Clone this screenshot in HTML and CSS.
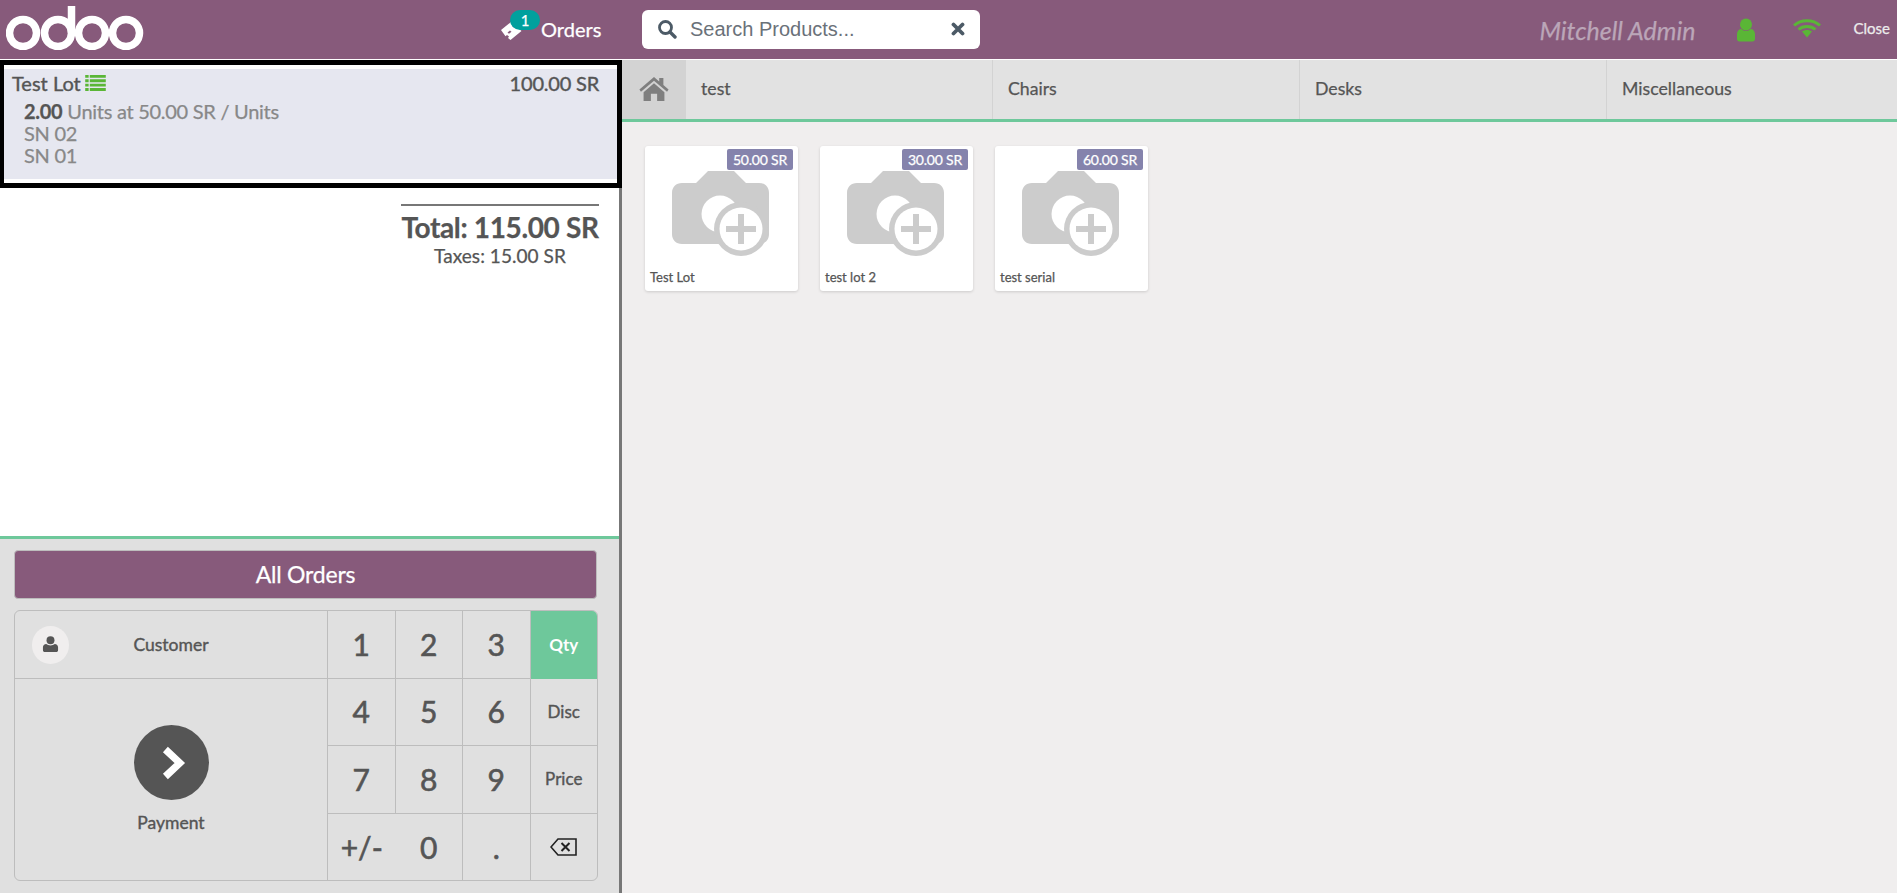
FILE: index.html
```html
<!DOCTYPE html>
<html lang="en">
<head>
    <meta charset="UTF-8">
    <title>Point of Sale</title>
    <link rel="stylesheet" href="styles.css">
</head>
<body>
<header class="topbar">
    <svg class="logo" viewBox="0 0 138 44">
        <g fill="none" stroke="#fff" stroke-width="7.500">
            <circle cx="17" cy="27" r="13.500"/>
            <circle cx="52" cy="27" r="13.500"/>
            <path d="M65.500 27V0"/>
            <circle cx="86" cy="27" r="13.500"/>
            <circle cx="120" cy="27" r="13.500"/>
        </g>
    </svg>
    <div class="orders-tab">
        <svg class="ticket" viewBox="0 0 24 22">
            <path fill="#fff" fill-rule="evenodd" d="M1 11 11 3l2.500 2-1.500 2 2 1.500L15.500 7l6 5-11 9-2.500-2 1-1.500-2-1.500-1.500 1.200zM10 11.500l-2.500 2 1.500 1.300 2.500-2z"/>
        </svg>
        <span class="badge">1</span>
        <span>Orders</span>
    </div>
    <div class="search">
        <svg class="search-icon" viewBox="0 0 20 20">
            <circle cx="8.500" cy="8.500" r="6" fill="none" stroke="#4c5a66" stroke-width="2.800"/>
            <path d="M13 13l5 5" stroke="#4c5a66" stroke-width="3.400" stroke-linecap="round"/>
        </svg>
        <input class="search-input" type="text" placeholder="Search Products...">
        <svg class="clear-icon" viewBox="0 0 14 14">
            <path d="M2.500 2.500l9 9M11.500 2.500l-9 9" stroke="#4c5a66" stroke-width="3.800" stroke-linecap="round"/>
        </svg>
    </div>
    <div class="status">
        <span class="cashier">Mitchell Admin</span>
        <svg class="status-user" viewBox="0 0 20 24">
            <circle cx="10" cy="6.500" r="6" fill="#5ab636"/>
            <path fill="#5ab636" d="M1 21v-5c0-3 2-5 4.500-5 1 1.500 2.800 2 4.500 2s3.500-.5 4.500-2c2.500 0 4.500 2 4.500 5v5c0 1.500-1 2.500-2.500 2.500h-13C2 23.500 1 22.500 1 21z"/>
        </svg>
        <svg class="status-wifi" viewBox="0 0 28 20">
            <g fill="none" stroke="#5ab636" stroke-width="3">
                <path d="M1 7.500c7-6.500 19-6.500 26 0"/>
                <path d="M5.500 11.500c4.500-4 12.500-4 17 0"/>
            </g>
            <path fill="#5ab636" d="M9 13.500c3-2 7-2 10 0l-5 6z"/>
        </svg>
        <span class="close-btn">Close</span>
    </div>
</header>

<main class="workspace">
    <section class="left-pane">
        <div class="order-box">
            <div class="orderline">
                <div class="line-top">
                    <span class="line-name">Test Lot
                        <svg class="lot-icon" viewBox="0 0 18 14">
                            <path fill="#5ab636" d="M0 0h3v2.500H0zM4 0h14v2.500H4zM0 3.800h3v2.500H0zM4 3.800h14v2.500H4zM0 7.600h3v2.500H0zM4 7.600h14v2.500H4zM0 11.400h3v2.500H0zM4 11.400h14v2.500H4z"/>
                        </svg>
                    </span>
                    <span class="line-price">100.00 SR</span>
                </div>
                <div class="line-info"><b>2.00</b> Units at 50.00 SR / Units</div>
                <div class="line-info">SN 02</div>
                <div class="line-info">SN 01</div>
            </div>
        </div>

        <div class="summary">
            <div class="summary-inner">
                <div class="total">Total: 115.00 SR</div>
                <div class="taxes">Taxes: 15.00 SR</div>
            </div>
        </div>

        <div class="controls">
            <div class="all-orders">All Orders</div>
            <div class="numpad">
                <div class="key customer">
                    <span class="avatar">
                        <svg viewBox="0 0 18 18" width="17" height="17">
                            <circle cx="9" cy="4.500" r="4.200" fill="#555"/>
                            <path fill="#555" d="M1 15v-3c0-2 1.500-3.500 3.500-3.500 1 1 2.800 1.500 4.500 1.500s3.500-.5 4.500-1.500c2 0 3.500 1.500 3.500 3.500v3c0 1-.8 2-2 2H3c-1.200 0-2-1-2-2z"/>
                        </svg>
                    </span>
                    <span>Customer</span>
                </div>
                <div class="key digit">1</div>
                <div class="key digit">2</div>
                <div class="key digit">3</div>
                <div class="key mode active">Qty</div>
                <div class="key payment">
                    <span class="pay-circle">
                        <svg viewBox="0 0 30 40" width="27" height="38">
                            <path d="M6 5l16 15L6 35" fill="none" stroke="#fff" stroke-width="8"/>
                        </svg>
                    </span>
                    <span>Payment</span>
                </div>
                <div class="key digit">4</div>
                <div class="key digit">5</div>
                <div class="key digit">6</div>
                <div class="key mode">Disc</div>
                <div class="key digit">7</div>
                <div class="key digit">8</div>
                <div class="key digit">9</div>
                <div class="key mode">Price</div>
                <div class="key digit">+/-</div>
                <div class="key digit">0</div>
                <div class="key digit">.</div>
                <div class="key mode">
                    <svg viewBox="0 0 27 18" width="27" height="18">
                        <path d="M8 1h18v16H8L1 9z" fill="none" stroke="#222" stroke-width="1.600"/>
                        <path d="M11.500 5l8 8M19.500 5l-8 8" stroke="#222" stroke-width="2"/>
                    </svg>
                </div>
            </div>
        </div>
    </section>

    <section class="right-pane">
        <nav class="categories">
            <div class="cat-home">
                <svg viewBox="0 0 28 24" width="30" height="25">
                    <path fill="#7f7f7f" d="M14 1 0 13l1.500 2L14 4.500 26.500 15l1.500-2-5-4.300V2h-4v3.300z"/>
                    <path fill="#7f7f7f" d="M14 7 4 15.500V24h7v-7h6v7h7v-8.500z"/>
                </svg>
            </div>
            <div class="cat">test</div>
            <div class="cat">Chairs</div>
            <div class="cat">Desks</div>
            <div class="cat cat-last">Miscellaneous</div>
        </nav>
        <div class="products">
            <article class="product">
                <span class="price-tag">50.00 SR</span>
                <svg class="camera" viewBox="0 0 97 85">
                    <use href="#camera-shape"/>
                </svg>
                <div class="product-name">Test Lot</div>
            </article>
            <article class="product">
                <span class="price-tag">30.00 SR</span>
                <svg class="camera" viewBox="0 0 97 85">
                    <use href="#camera-shape"/>
                </svg>
                <div class="product-name">test lot 2</div>
            </article>
            <article class="product">
                <span class="price-tag">60.00 SR</span>
                <svg class="camera" viewBox="0 0 97 85">
                    <use href="#camera-shape"/>
                </svg>
                <div class="product-name">test serial</div>
            </article>
        </div>
    </section>
</main>

<svg class="defs" width="0" height="0">
    <defs>
        <g id="camera-shape">
            <path fill="#ccc" d="M24 12 36 0h26l12 12h13c6 0 10 4 10 10v41c0 6-4 10-10 10H10C4 73 0 69 0 63V22c0-6 4-10 10-10z"/>
            <circle cx="48" cy="43" r="18.500" fill="#fff"/>
            <circle cx="69" cy="58" r="27" fill="#ccc"/>
            <circle cx="69" cy="58" r="21.500" fill="#fff"/>
            <path fill="#ccc" d="M66 43h6v12h12v6H72v12h-6V61H54v-6h12z"/>
        </g>
    </defs>
</svg>
</body>
</html>
```

FILE: styles.css
```css
* {
    box-sizing: border-box;
}

html, body {
    height: 100%;
}

body {
    margin: 0;
    display: flex;
    flex-direction: column;
    overflow: hidden;
    background: #fff;
    font-family: "Lato", "Open Sans", sans-serif;
    color: #555;
    -webkit-text-stroke: 0.25px;
}

/* top bar */
.topbar {
    height: 59px;
    flex: none;
    display: flex;
    align-items: center;
    background: #875a7b;
    color: #fff;
    margin-bottom: 1px;
}

.logo {
    width: 138px;
    height: 44px;
    margin-left: 6px;
    margin-top: -4px;
}

.orders-tab {
    position: relative;
    display: flex;
    align-items: center;
    margin-left: 356px;
    font-size: 20px;
    width: 142px;
    margin-top: -2px;
}

.ticket {
    width: 24px;
    height: 22px;
    margin-right: 17px;
    margin-top: 3px;
}

.badge {
    position: absolute;
    left: 10px;
    top: -6px;
    width: 30px;
    height: 20px;
    border-radius: 10px;
    background: #00a09d;
    font-size: 15px;
    line-height: 20px;
    text-align: center;
}

.search {
    width: 338px;
    height: 39px;
    margin-top: -1px;
    display: flex;
    align-items: center;
    background: #fff;
    border-radius: 6px;
    padding: 0 15px;
}

.search-icon {
    width: 20px;
    height: 20px;
    flex: none;
}

.search-input {
    flex: 1;
    min-width: 0;
    border: 0;
    outline: 0;
    background: none;
    padding: 0 0 0 13px;
    font-family: "Liberation Sans", Arial, sans-serif;
    font-size: 20px;
    -webkit-text-stroke: 0;
}

.search-input::placeholder {
    color: #6a7179;
    opacity: 1;
}

.clear-icon {
    width: 14px;
    height: 14px;
    flex: none;
}

.status {
    margin-left: auto;
    display: flex;
    align-items: center;
}

.cashier {
    font-size: 25px;
    font-style: italic;
    color: #bba6b8;
    margin-right: 40px;
}

.status-user {
    width: 20px;
    height: 24px;
    margin-right: 37px;
}

.status-wifi {
    width: 28px;
    height: 20px;
    margin-right: 33px;
    margin-top: -3px;
}

.close-btn {
    font-size: 15px;
    margin-right: 7px;
    margin-top: -3px;
    color: #ececec;
}

/* main area */
.workspace {
    flex: 1;
    display: flex;
    min-height: 0;
}

.left-pane {
    width: 622px;
    flex: none;
    display: flex;
    flex-direction: column;
    background: #777;
}

.order-box {
    height: 128px;
    flex: none;
    border: 5px solid #000;
    border-left-width: 4px;
    background: #fff;
    padding: 4px 0;
}

.orderline {
    height: 110px;
    background: #e6e7f0;
    padding: 3px 18px 0 8px;
}

.line-top {
    display: flex;
    justify-content: space-between;
    font-size: 20px;
    line-height: 22px;
    -webkit-text-stroke: 0.4px;
    margin-bottom: 6px;
}

.line-price {
    letter-spacing: -0.2px;
}

.line-name {
    display: flex;
    align-items: center;
    gap: 4px;
}

.lot-icon {
    width: 21px;
    height: 16px;
}

.line-info {
    font-size: 20px;
    line-height: 22px;
    letter-spacing: -0.28px;
    padding-left: 12px;
    color: #888;
}

.line-info b {
    color: #555;
}

.summary {
    flex: 1;
    background: #fff;
    margin-right: 3px;
    padding: 16px 20px 0 0;
    display: flex;
    justify-content: flex-end;
}

.summary-inner {
    width: 198px;
    height: 70px;
    border-top: 2px solid #777;
    text-align: center;
}

.total {
    font-size: 28px;
    font-weight: 700;
    line-height: 42px;
    letter-spacing: -0.35px;
    white-space: nowrap;
}

.taxes {
    font-size: 19px;
    line-height: 20px;
    letter-spacing: 0.05px;
    margin-top: -2px;
}

.controls {
    height: 357px;
    flex: none;
    margin-right: 3px;
    border-top: 3px solid #6ec89b;
    background: #e0e0e0;
    padding: 11px 22px 0 14px;
}

.all-orders {
    height: 49px;
    background: #875a7b;
    border: 1px solid #bdbdbd;
    border-radius: 4px;
    color: #fff;
    font-size: 23px;
    letter-spacing: -0.2px;
    display: flex;
    align-items: center;
    justify-content: center;
    padding-bottom: 2px;
    margin-bottom: 11px;
}

.numpad {
    display: grid;
    grid-template-columns: 313px 67.500px 67.500px 67.500px 1fr;
    grid-template-rows: 68px 67px 68px 67px;
    height: 271px;
    width: 584px;
    border: 1px solid #bdbdbd;
    border-radius: 6px;
    overflow: hidden;
}

.key {
    display: flex;
    align-items: center;
    justify-content: center;
    border-right: 1px solid #bdbdbd;
    border-bottom: 1px solid #bdbdbd;
}

.key:nth-child(5n) {
    border-right: 0;
}

.digit {
    font-size: 30px;
    padding-bottom: 2px;
    -webkit-text-stroke: 0.6px;
}

.mode {
    font-size: 17px;
    padding-bottom: 2px;
    -webkit-text-stroke: 0.4px;
    border-right: 0;
}

.active {
    background: #6ec89b;
    color: #fff;
    font-weight: 700;
    border-bottom: 0;
    -webkit-text-stroke: 0;
}

.customer {
    display: grid;
    grid-template-columns: 1fr auto 1fr;
    font-size: 17.500px;
    -webkit-text-stroke: 0.4px;
    padding-left: 17px;
    padding-right: 17px;
}

.avatar {
    width: 37px;
    height: 38px;
    border-radius: 50%;
    background: #f0eeee;
    display: flex;
    align-items: center;
    justify-content: center;
}

.payment {
    grid-row: 2 / span 3;
    grid-column: 1;
    flex-direction: column;
    gap: 12px;
    padding-bottom: 2px;
    font-size: 17.500px;
    -webkit-text-stroke: 0.4px;
    border-bottom: 0;
}

.pay-circle {
    width: 75px;
    height: 75px;
    border-radius: 50%;
    background: #555;
    display: flex;
    align-items: center;
    justify-content: center;
    padding-left: 4px;
}

.key:nth-last-child(-n+4) {
    border-bottom: 0;
}

/* products side */
.right-pane {
    flex: 1;
    min-width: 0;
    display: flex;
    flex-direction: column;
    background: #f0eeee;
}

.categories {
    height: 62px;
    flex: none;
    display: flex;
    background: #e2e2e2;
    border-bottom: 3px solid #6ec89b;
}

.cat-home {
    width: 63px;
    flex: none;
    background: #d3d3d3;
    display: flex;
    align-items: center;
    justify-content: center;
    padding-bottom: 2px;
}

.cat {
    width: 307px;
    flex: none;
    border-left: 1px solid #d3d3d3;
    display: flex;
    align-items: center;
    padding-left: 15px;
    padding-bottom: 2px;
    font-size: 17.700px;
}

.cat-last {
    flex: 1;
}

.products {
    display: flex;
    gap: 22px;
    padding: 24px 0 0 23px;
}

.product {
    position: relative;
    width: 153px;
    height: 145px;
    background: #fff;
    border-radius: 3px;
    box-shadow: 0 1px 3px rgba(0, 0, 0, 0.15);
    padding: 25px 0 0 27px;
}

.price-tag {
    position: absolute;
    top: 3px;
    right: 5px;
    width: 66px;
    height: 21px;
    background: #8583ac;
    border-radius: 2px;
    color: #fff;
    font-size: 14px;
    letter-spacing: -0.2px;
    line-height: 21px;
    text-align: center;
}

.camera {
    display: block;
    width: 97px;
    height: 85px;
}

.product-name {
    font-size: 13px;
    line-height: 16px;
    margin: 13px 0 0 -22px;
}

.defs {
    position: absolute;
}
```
